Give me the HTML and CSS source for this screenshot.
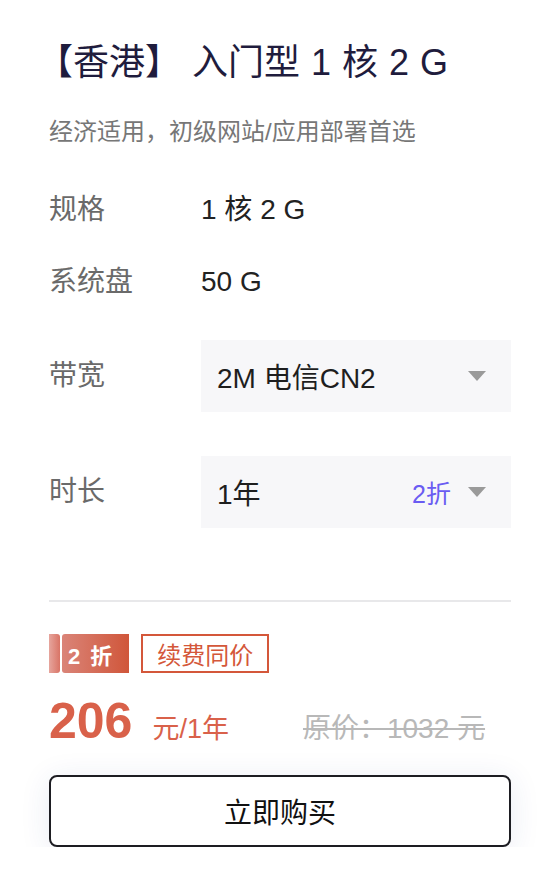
FILE: index.html
```html
<!DOCTYPE html>
<html lang="zh">
<head>
<meta charset="utf-8">
<link rel="stylesheet" href="styles.css">
</head>
<body>
<div class="card">
  <h1 class="title">【香港】 入门型 1 核 2 G</h1>
  <p class="desc">经济适用，初级网站/应用部署首选</p>

  <div class="row row-spec">
    <span class="label">规格</span>
    <span class="value">1 核 2 G</span>
  </div>
  <div class="row row-disk">
    <span class="label">系统盘</span>
    <span class="value">50 G</span>
  </div>
  <div class="row row-bw">
    <span class="label">带宽</span>
    <div class="select">
      <span class="select-text">2M 电信CN2</span>
      <span class="caret"></span>
    </div>
  </div>
  <div class="row row-time">
    <span class="label">时长</span>
    <div class="select">
      <span class="select-text">1年</span>
      <span class="select-tag">2折</span>
      <span class="caret"></span>
    </div>
  </div>

  <div class="divider"></div>

  <div class="tags">
    <div class="discount">
      <span class="discount-stub"></span>
      <span class="discount-main">2 折</span>
    </div>
    <span class="renew">续费同价</span>
  </div>

  <div class="price-line">
    <span class="price">206</span>
    <span class="unit">元/1年</span>
    <span class="origin">原价：1032 元</span>
  </div>

  <button class="buy">立即购买</button>
</div>
</body>
</html>
```

FILE: styles.css
```css
html, body {
  margin: 0;
  padding: 0;
  background: #ffffff;
}

body {
  font-family: "Liberation Sans", "Noto Sans CJK SC", sans-serif;
}

.card {
  display: flex;
  flex-direction: column;
  padding: 43px 47px 0 49px;
}

.title {
  margin: 0 0 0 -12px;
  font-size: 36px;
  line-height: 40px;
  font-weight: 400;
  word-spacing: 1px;
  color: #1f1c3d;
  white-space: nowrap;
}

.desc {
  margin: 34px 0 0;
  font-size: 24px;
  line-height: 30px;
  color: #777777;
}

.row {
  display: flex;
  align-items: center;
}

.label {
  width: 152px;
  flex: none;
  font-size: 28px;
  line-height: 36px;
  color: #6a6a6a;
}

.value {
  font-size: 28px;
  line-height: 36px;
  color: #222222;
}

.row-spec { margin-top: 45px; }
.row-disk { margin-top: 36px; }
.row-bw { margin-top: 40px; }
.row-time { margin-top: 44px; }

.select {
  flex: 1;
  height: 72px;
  display: flex;
  align-items: center;
  padding: 0 25px 0 16px;
  background: #f7f7f9;
}

.select-text {
  flex: 1;
  font-size: 28px;
  color: #1e1e1e;
}

.select-tag {
  font-size: 25px;
  color: #6a5cf2;
  margin-right: 17px;
}

.caret {
  width: 0;
  height: 0;
  border-left: 9px solid transparent;
  border-right: 9px solid transparent;
  border-top: 10px solid #9a9a9a;
}

.divider {
  margin-top: 72px;
  height: 2px;
  background: #e8e8ea;
}

.tags {
  margin-top: 32px;
  display: flex;
  align-items: stretch;
  gap: 12px;
  height: 39px;
}

.discount {
  display: flex;
  gap: 2px;
}

.discount-stub {
  width: 11px;
  background: linear-gradient(90deg, #e6a59d, #d97466);
  border-radius: 0 3px 3px 0;
}

.discount-main {
  display: flex;
  align-items: center;
  padding: 0 15px 0 6px;
  font-size: 22px;
  font-weight: 700;
  color: #ffffff;
  letter-spacing: 2px;
  background: linear-gradient(90deg, #da8478, #d0563a);
  border-radius: 3px 0 0 3px;
}

.renew {
  display: flex;
  align-items: center;
  padding: 0 14px;
  border: 2px solid #d4573a;
  font-size: 24px;
  color: #d4573a;
  box-sizing: border-box;
}

.price-line {
  margin-top: 20px;
  display: flex;
  align-items: baseline;
}

.price {
  font-size: 50px;
  line-height: 56px;
  font-weight: 700;
  color: #d9614a;
}

.unit {
  margin-left: 20px;
  font-size: 27px;
  color: #d9614a;
}

.origin {
  margin-left: 74px;
  font-size: 28px;
  color: #b8b8b8;
  text-decoration: line-through;
}

.buy {
  margin-top: 26px;
  height: 72px;
  border: 2px solid #1d1d22;
  border-radius: 8px;
  background: #ffffff;
  font-family: "Liberation Sans", "Noto Sans CJK SC", sans-serif;
  font-size: 28px;
  color: #111111;
  box-shadow: 0 4px 30px rgba(40, 60, 140, 0.1);
  cursor: pointer;
}
```
